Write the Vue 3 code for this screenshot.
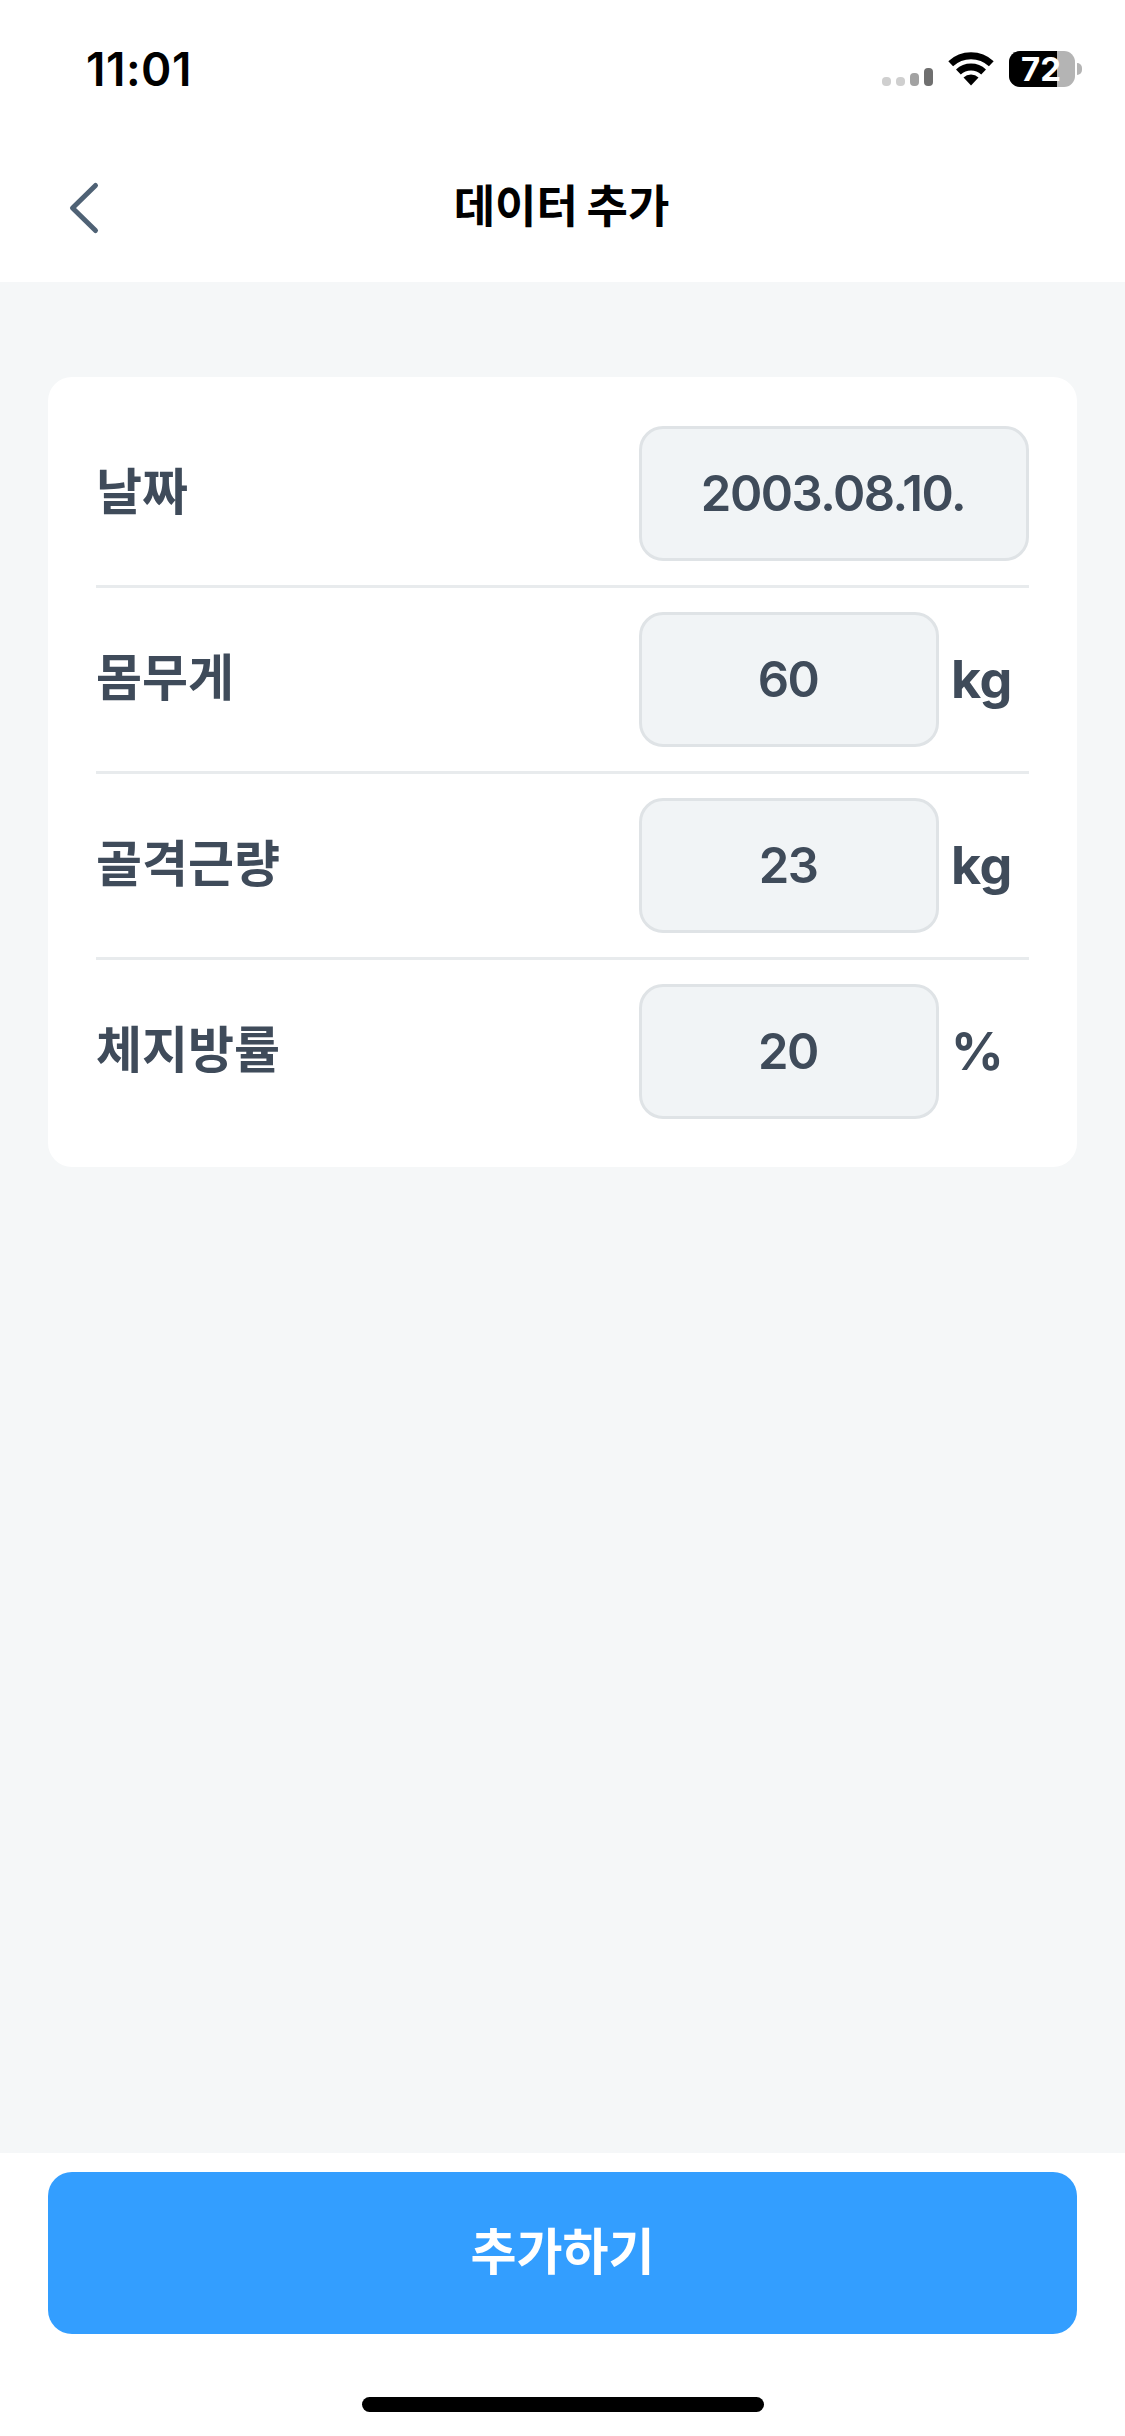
<script setup>
const rows = [
  { label: '날짜', value: '2003.08.10.', wide: true },
  { label: '몸무게', value: '60', unit: 'kg' },
  { label: '골격근량', value: '23', unit: 'kg' },
  { label: '체지방률', value: '20', unit: '%' },
]
</script>

<template>
  <div class="screen">
    <header class="top">
      <div class="status">
        <span class="time">11:01</span>
        <div class="indicators">
          <div class="signal">
            <i class="bar b1"></i><i class="bar b2"></i><i class="bar b3"></i><i class="bar b4"></i>
          </div>
          <svg class="wifi" width="46" height="34" viewBox="0 0 46 34">
            <path d="M2.700 11.750A29.750 29.750 0 0 1 43.300 11.750" fill="none" stroke="#000" stroke-width="7"/>
            <path d="M10.400 20A18.500 18.500 0 0 1 35.600 20" fill="none" stroke="#000" stroke-width="7"/>
            <path d="M15.500 25.500A11 11 0 0 1 30.500 25.500L23 33.500Z" fill="#000"/>
          </svg>
          <div class="battery">
            <div class="cell">
              <div class="fill"></div>
              <span class="pct">72</span>
            </div>
            <i class="cap"></i>
          </div>
        </div>
      </div>
      <nav class="nav">
        <svg class="back" width="34" height="54" viewBox="0 0 34 54">
          <path d="M28.500 4.500L5.500 27L28.500 49.500" fill="none" stroke="#4f6275" stroke-width="5" stroke-linecap="round" stroke-linejoin="round"/>
        </svg>
        <h1 class="title">데이터 추가</h1>
      </nav>
    </header>

    <main class="content">
      <section class="card">
        <div v-for="row in rows" :key="row.label" class="row">
          <span class="label">{{ row.label }}</span>
          <div class="control">
            <div class="field" :class="{ wide: row.wide }">{{ row.value }}</div>
            <span v-if="row.unit" class="unit">{{ row.unit }}</span>
          </div>
        </div>
      </section>
    </main>

    <footer class="foot">
      <button class="submit" type="button">추가하기</button>
      <div class="home"></div>
    </footer>
  </div>
</template>

<style scoped>
.screen {
  width: 1125px;
  height: 2436px;
  display: flex;
  flex-direction: column;
  background: #f5f7f8;
  font-family: Inter, "Noto Sans CJK KR", sans-serif;
  overflow: hidden;
}
.top { background: #fff; height: 282px; flex: none; }
.status {
  height: 132px;
  box-sizing: border-box;
  padding: 6px 43px 0 86px;
  display: flex;
  align-items: center;
  justify-content: space-between;
}
.time {
  font-size: 46px;
  font-weight: 600;
  color: #000;
  letter-spacing: 0.5px;
}
.indicators { display: flex; align-items: center; }
.signal { display: flex; align-items: flex-end; gap: 5px; height: 18px; margin-top: 16px; margin-right: 15px; }
.bar { width: 9px; border-radius: 4px; display: block; }
.b1, .b2 { height: 9px; background: #cfcfcf; }
.b3 { height: 13px; background: #a2a2a2; }
.b4 { height: 18px; background: #6f6f6f; }
.wifi { display: block; margin-right: 15px; }
.battery { display: flex; align-items: center; }
.cell {
  position: relative;
  width: 66px;
  height: 36px;
  border-radius: 11px;
  background: #b4b4b4;
}
.fill { width: 48px; height: 100%; background: #000; border-radius: 11px 0 0 11px; }
.pct {
  position: absolute;
  left: 12px;
  top: 0;
  line-height: 36px;
  font-size: 33px;
  font-weight: 700;
  color: #fff;
}
.cap { display: block; width: 5px; height: 12px; margin-left: 2px; background: #b4b4b4; border-radius: 0 6px 6px 0; }
.nav {
  height: 150px;
  position: relative;
  display: flex;
  align-items: center;
  justify-content: center;
}
.back { position: absolute; left: 67px; top: 49px; }
.title {
  margin: 0 2px 8px 0;
  font-size: 45px;
  font-weight: 700;
  color: #000;
  word-spacing: -2px;
}
.content { flex: 1; padding: 95px 48px 0; }
.card {
  background: #fff;
  border-radius: 24px;
  padding: 25px 48px 24px;
  display: flex;
  flex-direction: column;
}
.row {
  display: flex;
  align-items: center;
  justify-content: space-between;
  padding: 24px 0;
  border-bottom: 3px solid #e8ebed;
}
.row:last-child { border-bottom: 0; }
.label { font-size: 50px; font-weight: 700; color: #3f4b5a; line-height: 1; padding-bottom: 3px; }
.control { width: 390px; display: flex; align-items: center; gap: 12px; flex: none; }
.field {
  width: 300px;
  height: 135px;
  box-sizing: border-box;
  display: flex;
  align-items: center;
  justify-content: center;
  border: 3px solid #dfe3e6;
  border-radius: 24px;
  background: #f1f4f6;
  color: #3f4b5a;
  font-size: 49px;
  font-weight: 600;
  letter-spacing: -1.500px;
  padding-right: 2px;
}
.field.wide { width: 390px; }
.unit { font-size: 52px; font-weight: 700; color: #3f4b5a; letter-spacing: -0.5px; }
.foot {
  flex: none;
  height: 283px;
  box-sizing: border-box;
  background: #fff;
  padding: 19px 48px 0;
  display: flex;
  flex-direction: column;
  align-items: center;
}
.submit {
  width: 100%;
  height: 162px;
  flex: none;
  border: 0;
  padding: 0 0 10px;
  border-radius: 24px;
  background: #339eff;
  color: #fff;
  font-family: inherit;
  font-size: 50px;
  font-weight: 700;
}
.home { width: 402px; height: 15px; margin-top: 63px; border-radius: 8px; background: #000; flex: none; }
</style>
